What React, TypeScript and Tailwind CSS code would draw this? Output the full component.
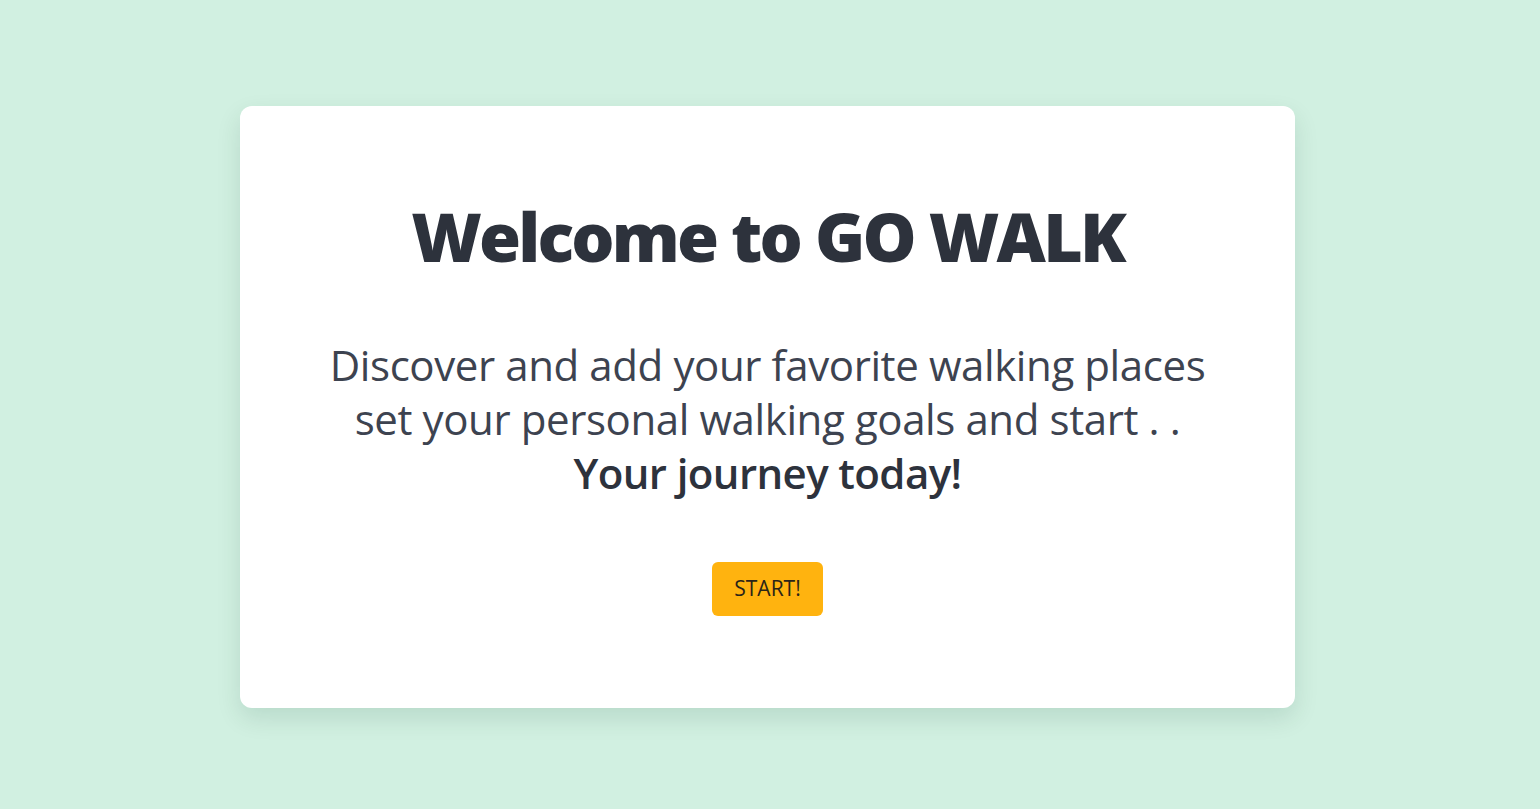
export default function App() {
  return (
    <div className="min-h-screen w-full bg-[#d1f0e1] flex items-center justify-center font-['Open_Sans','Noto_Sans',sans-serif] pr-[5px] pt-[5px]">
      {/* card */}
      <div className="w-[1055px] h-[602px] bg-white rounded-xl shadow-[0_10px_25px_rgba(0,60,40,0.12)] flex flex-col items-center pt-[89px]">
        <h1 className="text-[68px] leading-[1.2] font-extrabold text-[#2d323c] tracking-[-2.8px]">
          Welcome to GO WALK
        </h1>

        <p className="mt-[61px] text-[42px] leading-[54px] text-[#3d4350] text-center tracking-[-0.4px]">
          Discover and add your favorite walking places
          <br />
          set your personal walking goals and start . .
          <br />
          <span className="font-semibold text-[#2d323c] tracking-[-0.6px]">Your journey today!</span>
        </p>

        <button className="mt-[62px] w-[111px] h-[54px] bg-[#ffb30f] rounded-md text-[21px] font-medium text-[#2a2418]">
          START!
        </button>
      </div>
    </div>
  );
}
